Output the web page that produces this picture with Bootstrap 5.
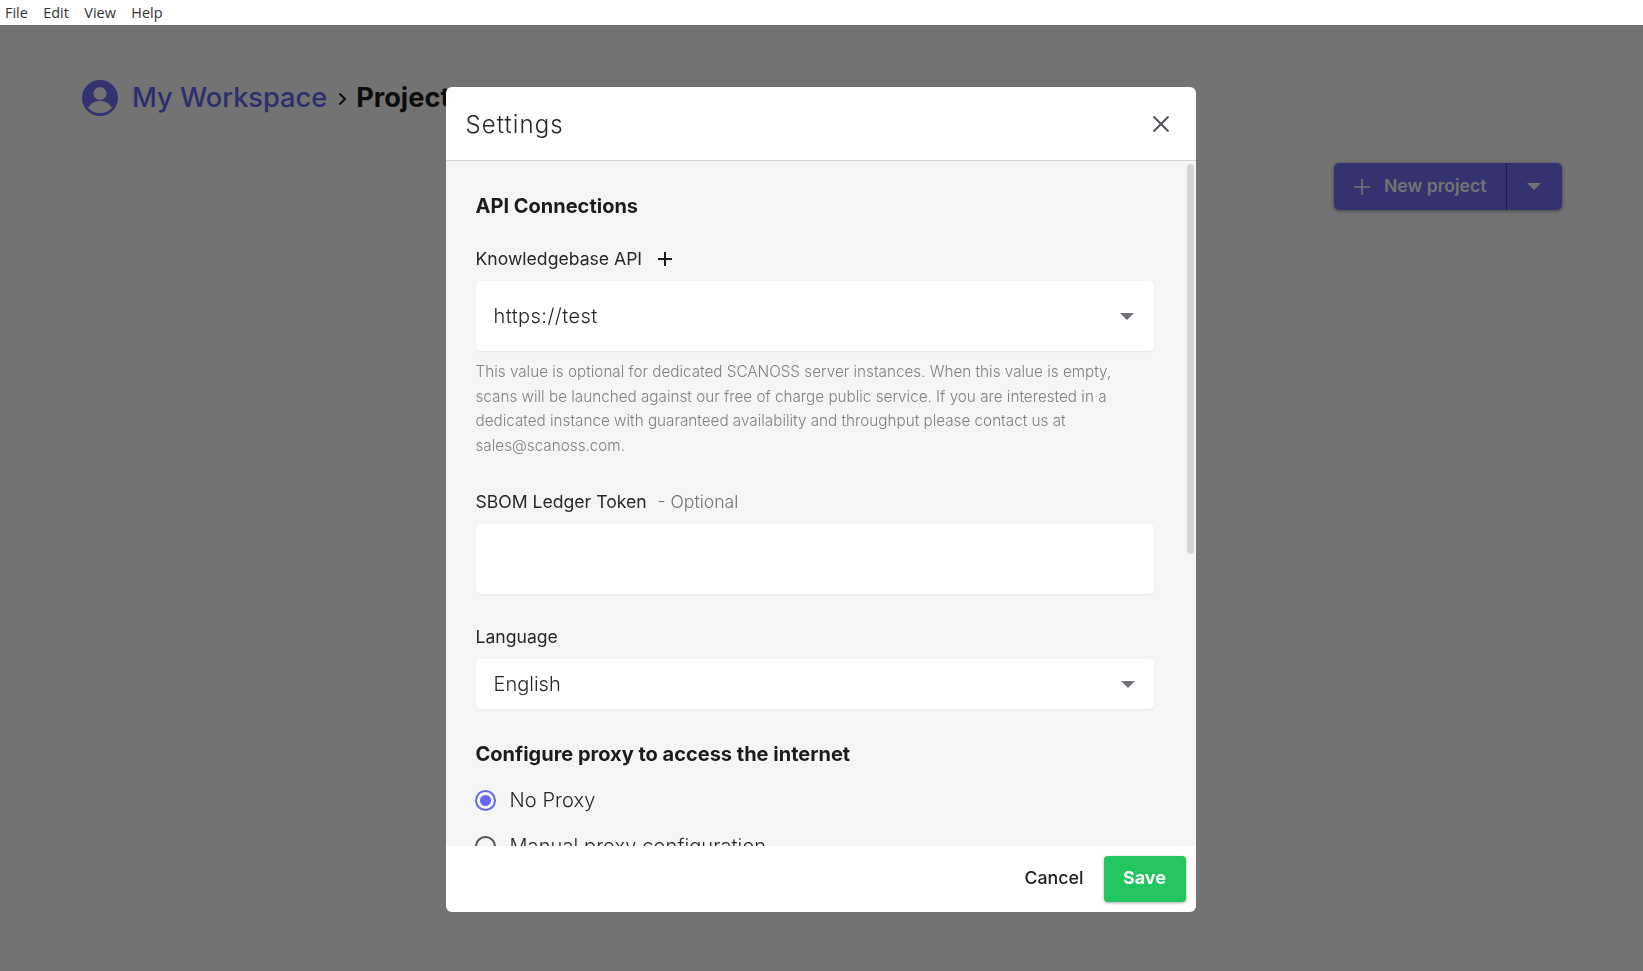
<!DOCTYPE html>
<html lang="en">
<head>
    <meta charset="UTF-8">
    <title>Settings</title>
    <link href="https://cdn.jsdelivr.net/npm/bootstrap@5.3.0/dist/css/bootstrap.min.css" rel="stylesheet">
    <style>
        html, body { height: 100%; overflow: hidden; }
        body { font-family: Inter, "Liberation Sans", sans-serif; color: #1c1c1e; background: #fff; }

        /* window menu */
        .menu-bar { height: 25px; padding-left: 5px; gap: 15.5px; font-family: "Open Sans", sans-serif; font-size: 14.4px; color: #333; line-height: 25px; }

        /* page behind the dialog */
        .page-area { padding: 51px 81px 0 82px; }
        .crumb-icon { margin-right: 14px; }
        .crumb-link { font-size: 27.2px; font-weight: 500; color: #6366f1; line-height: 42px; padding-top: 1px; }
        .crumb-sep { margin: 2px 9px 0 11px; }
        .crumb-current { font-size: 27.2px; font-weight: 700; color: #1c1c1e; line-height: 42px; padding-top: 1px; }
        .new-btn-row { margin-top: 44px; }
        .new-btn { height: 47px; background: #6f71f5; color: #fff; border-radius: 5px; font-weight: 600; font-size: 17.6px; box-shadow: 0 1px 4px rgba(0,0,0,.4); }
        .new-btn-main { width: 172.5px; padding-left: 20px; gap: 14px; border-right: 1px solid #3c3da0; }
        .new-btn-arrow { width: 55.5px; }

        /* backdrop + dialog */
        .backdrop-layer { position: fixed; top: 25px; left: 0; right: 0; bottom: 0; padding-right: 2px; background: rgba(0,0,0,.55); }
        .settings-box { width: 750px; height: 825px; margin-top: 62px; border: 0; border-radius: 6px; overflow: hidden; background: #fff; }
        .settings-head { height: 74px; padding: 3px 26px 0 20px; border-bottom: 1px solid #d4d4d8; }
        .settings-head svg { margin-top: -3px; }
        .settings-title { font-size: 24px; font-weight: 300; letter-spacing: 1.1px; margin: 0; color: #27272a; }
        .settings-body { position: relative; height: 685px; overflow: hidden; background: #f5f5f5; padding: 32px 42px 0 30px; }
        .fake-scroll { position: absolute; top: 3px; right: 2px; width: 7px; height: 390px; background: #d4d4d8; border-radius: 4px; }
        .settings-foot { height: 66px; padding: 0 10px 0 0; gap: 20px; }

        .sect-title { font-size: 20px; font-weight: 700; line-height: 26px; margin: 0; color: #1c1c1e; }
        .field-label { font-size: 17.6px; line-height: 26px; margin: 0; color: #27272a; }
        .field-opt { color: #71717a; margin-left: 6px; font-weight: 300; }
        .field-box { background: #fff; border-radius: 5px; font-size: 20px; font-weight: 300; color: #27272a; padding: 0 18px; box-shadow: 0 1px 2px rgba(0,0,0,.06); }
        .box-tall { height: 70px; }
        .box-low { height: 50px; }
        .url-value { letter-spacing: .45px; }
        .drop-caret { width: 0; height: 0; border-left: 7px solid transparent; border-right: 7px solid transparent; border-top: 7px solid #71717a; }
        .box-tall .drop-caret { margin-right: 2px; }
        .box-low .drop-caret { margin-right: 1px; }
        .new-btn .drop-caret { border-top-color: #fff; }
        .help-text { font-size: 15.25px; line-height: 24.5px; color: #808086; margin: 9px 0 0; font-weight: 300; }

        .first-label { margin-top: 27px; margin-bottom: 9px; }
        .next-label { margin-top: 30px; margin-bottom: 9px; }
        .help-text + .next-label { margin-top: 31px; }
        .plus-icon { margin-left: 16px; }
        .proxy-title { margin-top: 32px; }
        .radio-row { margin-top: 20px; margin-left: -1px; gap: 14px; }
        .radio-dot { width: 21px; height: 21px; border-radius: 50%; border: 2px solid #52525b; flex: none; }
        .radio-dot.is-on { border-color: #6366f1; position: relative; }
        .radio-dot.is-on::after { content: ""; position: absolute; inset: 3px; border-radius: 50%; background: #6366f1; }
        .radio-text { font-size: 20px; font-weight: 300; letter-spacing: .1px; color: #27272a; line-height: 26px; }

        .btn-cancel { font-size: 17.8px; font-weight: 500; color: #1c1c1e; margin-bottom: 2px; }
        .btn-save { width: 82px; height: 46px; padding: 0 0 3px; background: #22c55e; border: 0; border-radius: 4px; color: #fff; font-size: 18px; font-weight: 700; box-shadow: 0 1px 3px rgba(0,0,0,.35); }
        .btn-save:hover { background: #22c55e; color: #fff; }
    </style>
</head>
<body>
    <!-- window menu -->
    <div class="menu-bar d-flex">
        <span>File</span><span>Edit</span><span>View</span><span>Help</span>
    </div>

    <!-- page behind -->
    <div class="page-area">
        <div class="d-flex align-items-center">
            <svg class="crumb-icon" width="36" height="36" viewBox="0 0 36 36">
                <circle cx="18" cy="18" r="18" fill="#6f71f5"/>
                <circle cx="18" cy="13.5" r="6.500" fill="#fff"/>
                <path d="M6 28c3-5 7-7 12-7s9 2 12 7c-3 3-7 5-12 5s-9-2-12-5z" fill="#fff"/>
            </svg>
            <span class="crumb-link">My Workspace</span>
            <svg class="crumb-sep" width="9" height="14" viewBox="0 0 9 14"><path d="M1.500 1.500 7 7l-5.500 5.500" fill="none" stroke="#1c1c1e" stroke-width="2"/></svg>
            <span class="crumb-current">Projects</span>
        </div>
        <div class="new-btn-row d-flex justify-content-end">
            <div class="new-btn d-flex">
                <div class="new-btn-main d-flex align-items-center">
                    <svg width="16" height="16" viewBox="0 0 16 16"><path d="M8 0v16M0 8h16" stroke="#fff" stroke-width="1.600"/></svg>
                    <span>New project</span>
                </div>
                <div class="new-btn-arrow d-flex align-items-center justify-content-center">
                    <span class="drop-caret"></span>
                </div>
            </div>
        </div>
    </div>

    <!-- settings dialog -->
    <div class="backdrop-layer d-flex justify-content-center align-items-start">
        <div class="settings-box d-flex flex-column">
            <div class="settings-head d-flex align-items-center justify-content-between">
                <h2 class="settings-title">Settings</h2>
                <svg width="18" height="18" viewBox="0 0 18 18"><path d="M1.500 1.500l15 15M16.500 1.500l-15 15" stroke="#52525b" stroke-width="2"/></svg>
            </div>
            <div class="settings-body">
                <div class="fake-scroll"></div>
                <h3 class="sect-title">API Connections</h3>
                <div class="d-flex align-items-center first-label">
                    <label class="field-label">Knowledgebase API</label>
                    <svg class="plus-icon" width="14" height="14" viewBox="0 0 14 14"><path d="M7 0v14M0 7h14" stroke="#1c1c1e" stroke-width="2"/></svg>
                </div>
                <div class="field-box box-tall d-flex align-items-center justify-content-between">
                    <span class="url-value">https://test</span><span class="drop-caret"></span>
                </div>
                <p class="help-text">This value is optional for dedicated SCANOSS server instances. When this value is empty, scans will be launched against our free of charge public service. If you are interested in a dedicated instance with guaranteed availability and throughput please contact us at sales@scanoss.com.</p>
                <div class="next-label">
                    <label class="field-label">SBOM Ledger Token <span class="field-opt">- Optional</span></label>
                </div>
                <div class="field-box box-tall"></div>
                <div class="next-label">
                    <label class="field-label">Language</label>
                </div>
                <div class="field-box box-low d-flex align-items-center justify-content-between">
                    <span>English</span><span class="drop-caret"></span>
                </div>
                <h3 class="sect-title proxy-title">Configure proxy to access the internet</h3>
                <div class="d-flex align-items-center radio-row">
                    <span class="radio-dot is-on"></span><span class="radio-text">No Proxy</span>
                </div>
                <div class="d-flex align-items-center radio-row">
                    <span class="radio-dot"></span><span class="radio-text">Manual proxy configuration</span>
                </div>
            </div>
            <div class="settings-foot d-flex align-items-center justify-content-end">
                <span class="btn-cancel">Cancel</span>
                <button type="button" class="btn btn-save">Save</button>
            </div>
        </div>
    </div>

    <script src="https://cdn.jsdelivr.net/npm/bootstrap@5.3.0/dist/js/bootstrap.bundle.min.js"></script>
</body>
</html>
